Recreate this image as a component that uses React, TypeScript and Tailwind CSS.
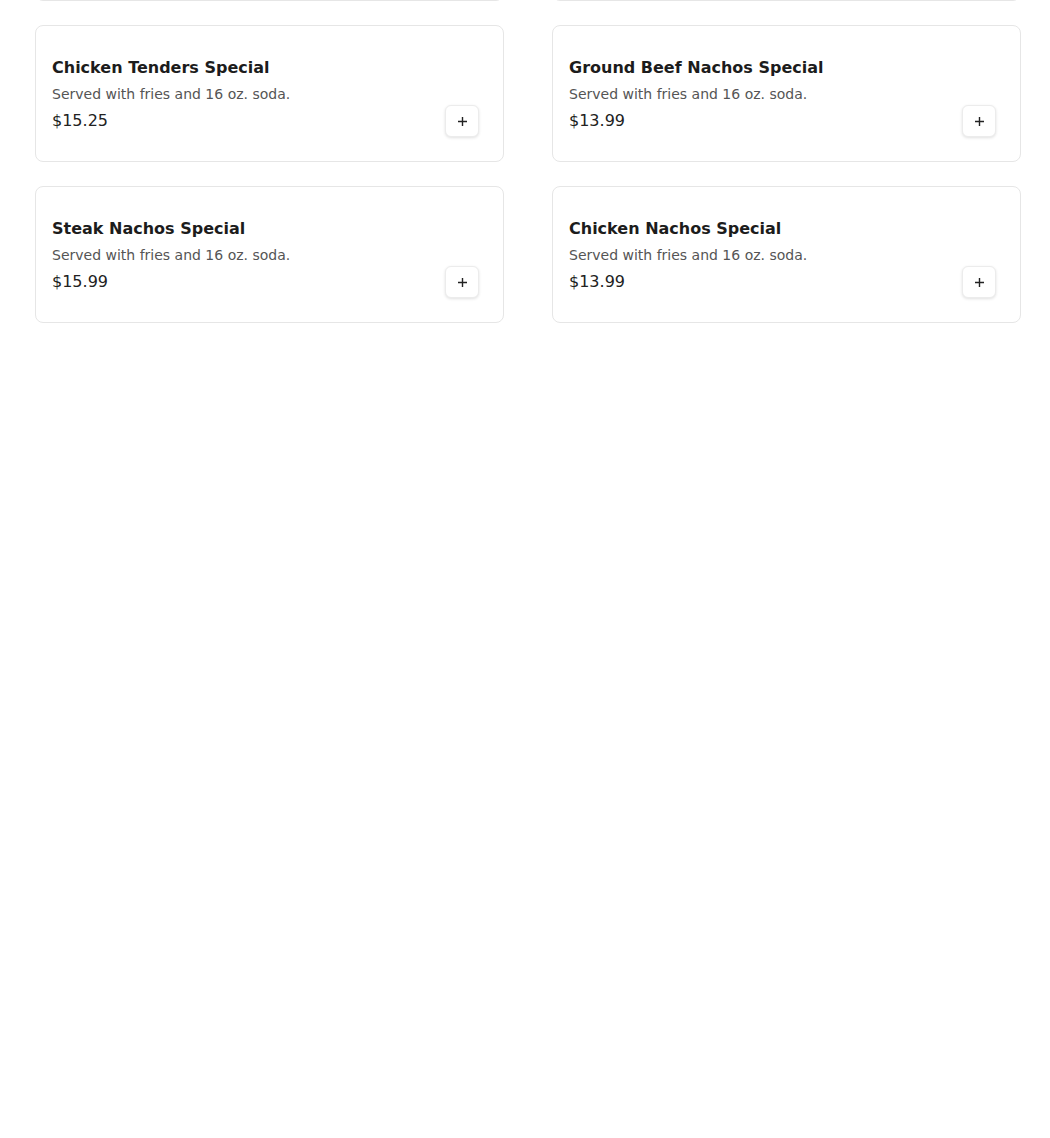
import React from "react";

type Item = { name: string; description: string; price: string };

const items: Item[] = [
  { name: "Chicken Tenders Special", description: "Served with fries and 16 oz. soda.", price: "$15.25" },
  { name: "Ground Beef Nachos Special", description: "Served with fries and 16 oz. soda.", price: "$13.99" },
  { name: "Steak Nachos Special", description: "Served with fries and 16 oz. soda.", price: "$15.99" },
  { name: "Chicken Nachos Special", description: "Served with fries and 16 oz. soda.", price: "$13.99" },
];

// row scrolled off the top of the viewport, only its bottom edge shows
const hidden: Item[] = [
  { name: "Beef Burrito Special", description: "Served with fries and 16 oz. soda.", price: "$13.99" },
  { name: "Chicken Burrito Special", description: "Served with fries and 16 oz. soda.", price: "$13.99" },
];

const AddButton: React.FC = () => (
  <button className="flex h-8 w-[34px] items-center justify-center rounded-md border border-[#ececec] bg-white shadow-[0_1px_3px_rgba(0,0,0,0.12)]">
    <svg width="11" height="11" viewBox="0 0 11 11">
      <path d="M5.5 1v9M1 5.5h9" stroke="#222" strokeWidth="1.4" />
    </svg>
  </button>
);

const MenuCard: React.FC<{ item: Item; hiddenRow?: boolean }> = ({ item, hiddenRow }) => (
  <div
    className="flex h-[137px] flex-col rounded-lg border border-[#e6e6e6] bg-white px-4 pt-[30px]"
    aria-hidden={hiddenRow}
  >
    {!hiddenRow && (
      <>
        <div className="text-base leading-6 font-bold text-[#1c1c1c]">{item.name}</div>
        <div className="mt-1 text-sm leading-5 text-[#555]">{item.description}</div>
        <div className="mt-px flex items-center justify-between pr-2">
          <span className="text-base leading-6 text-[#222]">{item.price}</span>
          <AddButton />
        </div>
      </>
    )}
  </div>
);

export default function App() {
  return (
    <div className="min-h-[1138px] overflow-hidden bg-white font-['DejaVu_Sans',sans-serif]">
      <div className="-mt-[136px] grid grid-cols-2 gap-x-12 gap-y-6 pl-[35px] pr-[29px]">
        {hidden.map((item, i) => (
          <MenuCard key={"h" + i} item={item} hiddenRow />
        ))}
        {items.map((item, i) => (
          <MenuCard key={i} item={item} />
        ))}
      </div>
    </div>
  );
}
